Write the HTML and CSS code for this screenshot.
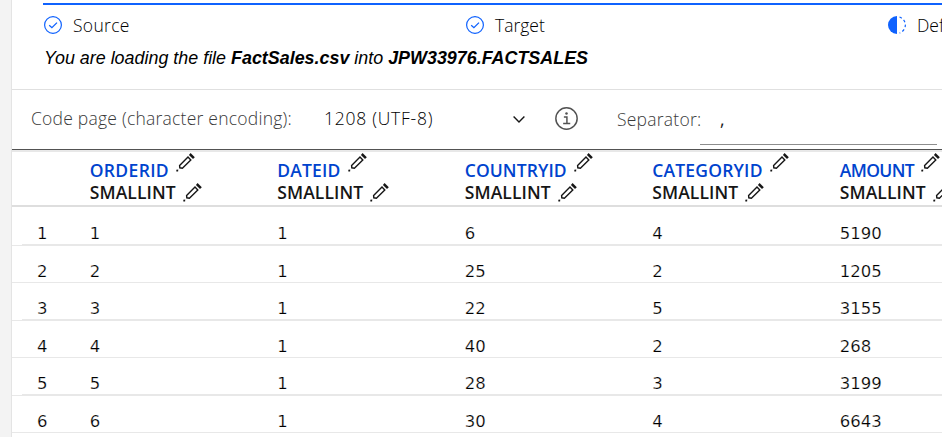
FILE: index.html
```html
<!DOCTYPE html>
<html lang="en">
<head>
<meta charset="utf-8">
<title>Load data</title>
<link rel="stylesheet" href="styles.css">
</head>
<body>
<svg class="defs" aria-hidden="true">
  <symbol id="check" viewBox="0 0 18 18"><circle cx="9" cy="9" r="8.4" fill="none" stroke="currentColor" stroke-width="1.2"/><path d="M5.2 9.2 7.9 11.7 13 6.6" fill="none" stroke="currentColor" stroke-width="1.3"/></symbol>
  <symbol id="half" viewBox="0 0 18 18"><path d="M9 0A9 9 0 0 0 9 18Z" fill="currentColor"/><path d="M11.5 1A8.4 8.4 0 0 1 11.5 17" fill="none" stroke="currentColor" stroke-width="1.2" stroke-dasharray="2.6 2.4"/></symbol>
  <symbol id="pencil" viewBox="0 0 19 19"><path d="M3.6 12.4 12 4.1 14.8 6.9 6.4 15.2 3.8 14.8Z" fill="none" stroke="currentColor" stroke-width="1.4"/><path d="M12.9 1.9 14.6.1 18.8 4.3 17 6Z" fill="currentColor"/><path d="M.3 16.8 2.3 16.4 2.1 18.5H.3Z" fill="currentColor"/></symbol>
</svg>
<main class="panel">
  <section class="intro">
    <ol class="steps">
      <li class="step"><svg class="step-icon"><use href="#check"/></svg><span class="source">Source</span></li>
      <li class="step"><svg class="step-icon"><use href="#check"/></svg><span class="target">Target</span></li>
      <li class="step"><svg class="step-icon"><use href="#half"/></svg><span>Define</span></li>
    </ol>
    <p class="message">You are loading the file <b>FactSales.csv</b> into <b>JPW33976.FACTSALES</b></p>
  </section>
  <section class="options">
    <span class="label code-label">Code page (character encoding):</span>
    <span class="value">1208 (UTF-8)</span>
    <svg class="chevron" viewBox="0 0 12 7"><path d="M.6.6 6 6 11.4.6" fill="none" stroke="#161616" stroke-width="1.4"/></svg>
    <svg class="info" viewBox="0 0 22 22"><circle cx="11" cy="11" r="10.2" fill="none" stroke="#525252" stroke-width="1.4"/><path d="M8.5 9.5H11.4V15.5M7.8 15.7H14.6" fill="none" stroke="#525252" stroke-width="1.4"/><circle cx="11" cy="6.2" r="1.2" fill="#525252"/></svg>
    <span class="label sep-label">Separator:</span>
    <span class="input">,</span>
  </section>
  <section class="table">
    <div class="grid head">
      <span></span>
      <div class="col"><div class="name"><span class="orderid">ORDERID</span><svg><use href="#pencil"/></svg></div><div class="type"><span>SMALLINT</span><svg><use href="#pencil"/></svg></div></div>
      <div class="col"><div class="name"><span class="dateid">DATEID</span><svg><use href="#pencil"/></svg></div><div class="type"><span>SMALLINT</span><svg><use href="#pencil"/></svg></div></div>
      <div class="col"><div class="name"><span class="countryid">COUNTRYID</span><svg><use href="#pencil"/></svg></div><div class="type"><span>SMALLINT</span><svg><use href="#pencil"/></svg></div></div>
      <div class="col"><div class="name"><span class="categoryid">CATEGORYID</span><svg><use href="#pencil"/></svg></div><div class="type"><span>SMALLINT</span><svg><use href="#pencil"/></svg></div></div>
      <div class="col"><div class="name"><span class="amount">AMOUNT</span><svg><use href="#pencil"/></svg></div><div class="type"><span>SMALLINT</span><svg><use href="#pencil"/></svg></div></div>
    </div>
    <div class="rows">
      <div class="grid row thick"><span class="num">1</span><span>1</span><span>1</span><span>6</span><span>4</span><span>5190</span></div>
      <div class="grid row"><span class="num">2</span><span>2</span><span>1</span><span>25</span><span>2</span><span>1205</span></div>
      <div class="grid row thick"><span class="num">3</span><span>3</span><span>1</span><span>22</span><span>5</span><span>3155</span></div>
      <div class="grid row"><span class="num">4</span><span>4</span><span>1</span><span>40</span><span>2</span><span>268</span></div>
      <div class="grid row thick"><span class="num">5</span><span>5</span><span>1</span><span>28</span><span>3</span><span>3199</span></div>
      <div class="grid row"><span class="num">6</span><span>6</span><span>1</span><span>30</span><span>4</span><span>6643</span></div>
    </div>
  </section>
</main>
</body>
</html>
```
FILE: styles.css
```css
* { box-sizing: border-box; }
body {
  margin: 0;
  height: 437px;
  overflow: hidden;
  background: #f3f3f3;
  color: #161616;
  font: 300 17.5px/24px "Open Sans", "Noto Sans", sans-serif;
}
.defs { position: absolute; width: 0; height: 0; }
svg { display: block; flex: none; }
.panel {
  height: 437px;
  margin-left: 11px;
  border-left: 1px solid #e4e4e4;
  background: #fff;
  overflow: hidden;
}
.intro { height: 90px; padding-top: 3px; border-bottom: 1px solid #e0e0e0; }
.steps {
  display: grid;
  grid-template-columns: 422px 422px 200px;
  width: 1044px;
  height: 43px;
  margin: 0 0 0 31px;
  padding: 9px 0 0;
  border-top: 2px solid #0f62fe;
  list-style: none;
}
.step { display: flex; gap: 11px; color: #000; }
.step-icon { width: 18px; height: 18px; margin: 2px 0 0 1px; color: #0f62fe; }
.step span { margin-top: -1px; }
.source { letter-spacing: .3px; }
.message {
  margin: 0 0 0 32px;
  font: italic 400 17.9px/24px "Liberation Sans", sans-serif;
  color: #000;
  white-space: nowrap;
}
.options {
  display: flex;
  height: 60px;
  padding-left: 19px;
  border-bottom: 1px solid #525252;
  white-space: nowrap;
}
.label { color: #393939; letter-spacing: .23px; }
.code-label { width: 293px; padding-top: 16px; }
.value { width: 189px; padding-top: 16px; color: #000; letter-spacing: .75px; }
.chevron { width: 12px; height: 7px; margin-top: 26px; }
.info { width: 23px; height: 23px; margin: 17px 0 0 30px; }
.sep-label { width: 83px; margin-left: 39px; padding-top: 17px; }
.input { width: 237px; height: 55px; padding: 17px 0 0 20px; border-bottom: 1px solid #8d8d8d; font-weight: 400; }
.grid { display: grid; grid-template-columns: 77.7px 187.5px 187.5px 187.5px 187.5px 187.5px; width: 1016px; }
.head {
  height: 57px;
  border-top: 2px solid #e8e8e8;
  border-bottom: 2px solid #dedede;
  font-weight: 600;
  line-height: 22px;
}
.name, .type { display: flex; height: 22px; gap: 7px; letter-spacing: .1px; }
.name { margin-top: 7px; color: #0043ce; }
.name svg, .type svg { width: 19px; height: 19px; color: #161616; }
.name svg { margin-top: -6px; }
.type svg { margin-top: 2px; }
.orderid { letter-spacing: .35px; }
.dateid, .categoryid { letter-spacing: .2px; }
.amount { letter-spacing: -.6px; }
.rows { margin-top: 1px; }
.row {
  height: 37.5px;
  padding-top: 13px;
  font: 400 16.5px/26px "DejaVu Sans", sans-serif;
  color: #000;
  -webkit-text-stroke: .22px #fff;
  background: linear-gradient(#e8e8e8, #e8e8e8) 0 100% / 100% 1px no-repeat;
}
.thick { background: linear-gradient(#e8e8e8, #e8e8e8) 0 100% / 100% 1px no-repeat, linear-gradient(#e8e8e8, #e8e8e8) 10px 100% / 100% 2px no-repeat; }
.num { padding-left: 25px; }
```
